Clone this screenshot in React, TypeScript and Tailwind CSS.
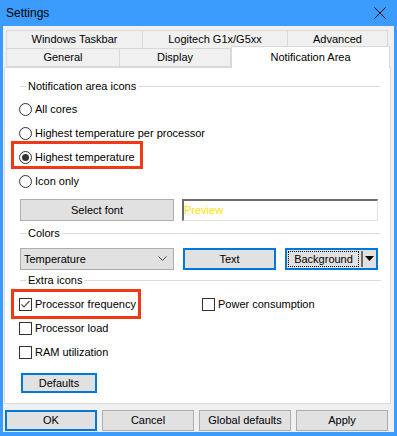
import React from 'react';

const font = { fontFamily: '"Liberation Sans", Arial, sans-serif' };

const GroupLabel: React.FC<{ label: string; className?: string }> = ({ label, className }) => (
  <div className={`flex items-center h-[16px] ${className ?? ''}`}>
    <div className="w-[6px] h-px bg-[#dcdcdc]" />
    <span className="px-[2px] text-[11px] text-black leading-none">{label}</span>
    <div className="flex-1 h-px bg-[#dcdcdc]" />
  </div>
);

const Radio: React.FC<{ label: string; checked?: boolean }> = ({ label, checked }) => (
  <div className="flex items-center gap-[3px] h-[24px]">
    <span className="w-[13px] h-[13px] rounded-full border border-[#333333] bg-white flex items-center justify-center">
      {checked && <span className="w-[7px] h-[7px] rounded-full bg-[#333333]" />}
    </span>
    <span className="text-[11px] text-black">{label}</span>
  </div>
);

const Check: React.FC<{ label: string; checked?: boolean }> = ({ label, checked }) => (
  <div className="flex items-center gap-[3px]">
    <span className="w-[13px] h-[13px] border border-[#333333] bg-white flex items-center justify-center">
      {checked && (
        <svg width="11" height="11" viewBox="0 0 11 11">
          <path d="M1.5 5.5 L4 8 L9.5 2" fill="none" stroke="#555555" strokeWidth="1.2" />
        </svg>
      )}
    </span>
    <span className="text-[11px] text-black">{label}</span>
  </div>
);

const Button: React.FC<{ label: string; focus?: boolean; className?: string }> = ({ label, focus, className }) => (
  <div
    className={`flex items-center justify-center bg-[#e1e1e1] text-[11px] text-black ${
      focus ? 'border-2 border-[#0078d7]' : 'border border-[#adadad]'
    } ${className ?? ''}`}
  >
    {label}
  </div>
);

export default function App() {
  return (
    <div className="w-[397px] h-[436px] bg-[#3c9cfe] flex flex-col px-[3px] pb-[4px]" style={font}>
      {/* title bar */}
      <div className="h-[26px] flex items-center justify-between pl-[3px] pr-[8px]">
        <span className="text-[12px] text-black">Settings</span>
        <svg width="12" height="12" viewBox="0 0 12 12">
          <path d="M0.5 0.5 L11.5 11.5 M11.5 0.5 L0.5 11.5" stroke="#000" strokeWidth="1" />
        </svg>
      </div>

      <div className="flex-1 bg-[#f0f0f0] flex flex-col pt-[4px] pb-[1px]">
        {/* tabs */}
        <div className="flex ml-[3px] h-[18px]">
          <div className="w-[137px] border border-[#d9d9d9] border-b-0 flex items-center justify-center text-[11px]">Windows Taskbar</div>
          <div className="w-[145px] border border-[#d9d9d9] border-l-0 border-b-0 flex items-center justify-center text-[11px]">Logitech G1x/G5xx</div>
          <div className="w-[100px] border border-[#d9d9d9] border-l-0 border-b-0 flex items-center justify-center text-[11px]">Advanced</div>
        </div>
        <div className="flex ml-[3px] h-[19px] items-end">
          <div className="w-[114px] h-[19px] border border-[#d9d9d9] flex items-center justify-center text-[11px]">General</div>
          <div className="w-[111px] h-[19px] border border-[#d9d9d9] border-l-0 flex items-center justify-center text-[11px]">Display</div>
          <div className="relative z-10 w-[159px] h-[22px] -mb-px bg-white border border-[#d9d9d9] border-b-0 flex items-start pt-[2px] justify-center text-[11px]">
            Notification Area
          </div>
        </div>

        {/* tab panel */}
        <div className="flex-1 ml-[1px] mr-[3px] bg-white border border-[#d9d9d9] flex flex-col pl-[14px] pr-[9px]">
          <GroupLabel label="Notification area icons" className="mt-[10px] ml-[1px]" />
          <div className="mt-[3px] flex flex-col">
            <Radio label="All cores" />
            <Radio label="Highest temperature per processor" />
            <div className="relative">
              <Radio label="Highest temperature" checked />
              <div className="absolute left-[-8px] top-[-4px] w-[132px] h-[28px] border-[3px] border-[#f03a17]" />
            </div>
            <Radio label="Icon only" />
          </div>

          <div className="mt-[6px] flex items-center h-[22px] ml-[1px]">
            <Button label="Select font" className="w-[154px] h-[22px]" />
            <div className="ml-[8px] w-[196px] h-[22px] bg-white border-t-2 border-l-2 border-[#6d6d6d] border-r border-b border-r-[#e3e3e3] border-b-[#e3e3e3] flex items-center">
              <span className="text-[11px] text-[#ffe100]">Preview</span>
            </div>
          </div>

          <GroupLabel label="Colors" className="mt-[4px] ml-[1px]" />

          <div className="mt-[7px] flex items-center h-[22px] ml-[1px]">
            <div className="w-[154px] h-[22px] bg-[#e1e1e1] border border-[#adadad] flex items-center justify-between pl-[3px] pr-[6px]">
              <span className="text-[11px] text-black">Temperature</span>
              <svg width="9" height="6" viewBox="0 0 9 6">
                <path d="M0.5 0.5 L4.5 4.5 L8.5 0.5" fill="none" stroke="#444" strokeWidth="1" />
              </svg>
            </div>
            <Button label="Text" focus className="ml-[9px] w-[93px] h-[22px]" />
            <div className="ml-[9px] w-[93px] h-[22px] bg-[#e1e1e1] border-2 border-[#0078d7] flex items-center p-px">
              <div className="flex-1 h-full border border-dotted border-black flex items-center justify-center text-[11px] text-black">
                Background
              </div>
              <div className="w-[2px] h-[16px] bg-[#6d6d6d] mx-[2px]" />
              <svg width="9" height="6" viewBox="0 0 9 6" className="mr-[1px]">
                <path d="M0 0 L9 0 L4.5 5 Z" fill="#000" />
              </svg>
            </div>
          </div>

          <GroupLabel label="Extra icons" className="mt-[2px] ml-[1px]" />

          <div className="mt-[4px] flex flex-col">
            <div className="relative h-[24px] flex items-center">
              <div className="w-[183px]">
                <Check label="Processor frequency" checked />
              </div>
              <Check label="Power consumption" />
              <div className="absolute left-[-8px] top-[-3px] w-[130px] h-[30px] border-[3px] border-[#f03a17]" />
            </div>
            <div className="h-[24px] flex items-center">
              <Check label="Processor load" />
            </div>
            <div className="h-[24px] flex items-center">
              <Check label="RAM utilization" />
            </div>
          </div>

          <Button label="Defaults" focus className="mt-[9px] ml-[2px] w-[76px] h-[20px]" />
        </div>

        {/* bottom buttons */}
        <div className="mt-[6px] flex gap-[5px] pl-[2px] h-[21px]">
          <Button label="OK" focus className="w-[92px] h-[21px]" />
          <Button label="Cancel" className="w-[92px] h-[21px]" />
          <Button label="Global defaults" className="w-[92px] h-[21px]" />
          <Button label="Apply" className="w-[92px] h-[21px]" />
        </div>
      </div>
    </div>
  );
}
